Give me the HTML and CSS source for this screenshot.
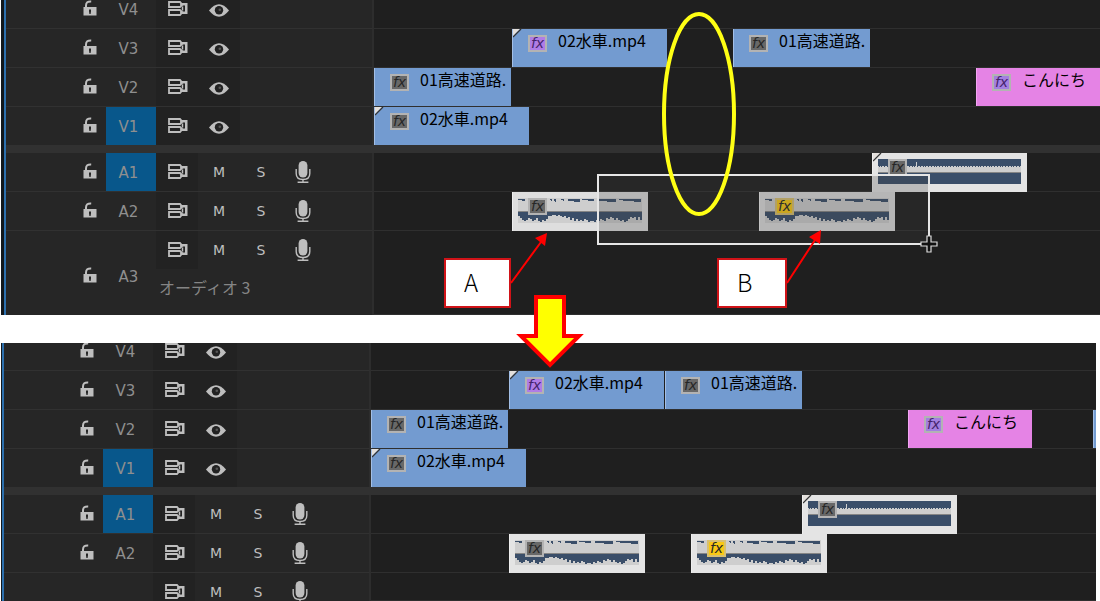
FILE: index.html
```html
<!DOCTYPE html>
<html lang="ja">
<head>
    <meta charset="UTF-8">
    <title>タイムライン</title>
    <link rel="stylesheet" href="styles.css">
</head>
<body>
<svg class="symbols" aria-hidden="true">
    <symbol id="lock" viewBox="0 0 14 16">
        <path d="M3 8V5.500C3 2.600 4.600 1.200 8.200 1.400" fill="none" stroke="currentColor" stroke-width="2"/>
        <path d="M.5 7h13v8.500H.5zM6 9.500v2l.4 2.500h1.200l.4-2.500v-2z" fill="currentColor" fill-rule="evenodd"/>
    </symbol>
    <symbol id="sync" viewBox="0 0 20 15">
        <path d="M1 1h11l1 1v3l-1 1H1zM1 9h11l1 1v3l-1 1H1z" fill="none" stroke="currentColor" stroke-width="1.800"/>
        <path d="M13 2h6.500v11H13v-3.500h1l1 1h2V4.500h-2l-1 1h-1z" fill="currentColor"/>
        <path d="M14.500 5.500v4" stroke="currentColor" stroke-width="1.500"/>
    </symbol>
    <symbol id="eye" viewBox="0 0 20 13">
        <path d="M0 6.500Q5 .3 10 .3T20 6.500Q15 12.700 10 12.700T0 6.500z" fill="currentColor"/>
        <circle cx="10" cy="6.300" r="4.200" fill="#222"/>
        <circle cx="10.800" cy="5.800" r="1.300" fill="#555"/>
    </symbol>
    <symbol id="mic" viewBox="0 0 16 22">
        <rect x="3.600" y="0" width="8.800" height="16.500" rx="4.400" fill="currentColor"/>
        <path d="M1.200 8v4.500C1.200 16.400 4 18.500 8 18.500s6.800-2.100 6.800-6V8M8 18v3M2.600 21.200h10.800" fill="none" stroke="currentColor" stroke-width="1.400"/>
    </symbol>
</svg>

<main class="page">
    <section class="panel before" aria-label="移動前">
        <div class="tracks"></div>
        <svg class="marks" width="1100" height="315" aria-hidden="true">
            <rect x="598" y="175" width="331" height="69" fill="#3f3f3f" fill-opacity=".25" stroke="#e6e6e6" stroke-width="2"/>
            <path d="M927 236h4v6h6v4h-6v6h-4v-6h-6v-4h6z" fill="#111" stroke="#ddd" stroke-width="1.200"/>
            <ellipse cx="699" cy="114" rx="35" ry="100" fill="none" stroke="#ffff14" stroke-width="4"/>
            <g stroke="#f00" fill="#f00" stroke-width="2">
                <path d="M511 283L541 242M787 283L815 240"/>
                <path d="M547 233L535 238L545 246zM821 230L809 237L820 244z" stroke="none"/>
            </g>
        </svg>
        <div class="label label-a">A</div>
        <div class="label label-b">B</div>
    </section>
    <div class="gap">
        <svg class="arrow" width="68" height="76" aria-hidden="true">
            <path d="M20 4h28v39h15L34 72L5 43h15z" fill="#ff0" stroke="#f00" stroke-width="4"/>
        </svg>
    </div>
    <section class="panel after" aria-label="移動後">
        <div class="tracks"></div>
    </section>
</main>
<script src="script.js"></script>
</body>
</html>
```
FILE: styles.css
```css
* {
    box-sizing: border-box;
}
body {
    margin: 0;
    background: #fff;
    font-family: "Noto Sans CJK JP", sans-serif;
    font-size: 16px;
}
.symbols {
    position: absolute;
    width: 0;
    height: 0;
}
.page {
    overflow: hidden;
}
.panel {
    position: relative;
    margin-left: 1px;
    background: #1f1f1f;
    border-left: 3px solid #11171c;
}
.tracks {
    border-left: 2px solid #2c70ae;
    overflow: hidden;
}
.after {
    border-left-width: 1px;
    margin-right: 4px;
}
.gap {
    position: relative;
    z-index: 2;
    height: 28px;
}

/* 行 */
.track {
    display: flex;
    height: 39px;
    overflow: hidden;
}
.track.top {
    height: 29px;
    align-items: flex-end;
}
.after .track.top {
    height: 28px;
}
.track.top .head,
.track.top .lane {
    height: 39px;
}
.track.last-video {
    height: 38px;
}
.track.tall {
    height: 84px;
}
.track.tall .head {
    height: 90px;
}
.after .track.tall {
    height: 28px;
}
.divider {
    height: 8px;
    background: #313131;
}
.head {
    display: grid;
    grid-template-columns: 100px 50px 42px 42px 42px 42px 1fr;
    grid-template-rows: 38px 1fr;
    flex: none;
    width: 368px;
    background: #262626;
    border-right: 2px solid #2d2d2d;
    border-bottom: 1px solid #313131;
}
.after .head {
    grid-template-columns: 99px 50px 42px 42px 42px 42px 1fr;
    width: 367px;
}
.lane {
    position: relative;
    flex: 1;
    border-bottom: 1px solid #2f2f2f;
}
.last-video .head,
.last-video .lane {
    border-bottom: 0;
}
.head button {
    display: flex;
    align-items: center;
    justify-content: center;
    padding: 0;
    border: 0;
    background: none;
    color: #bebebe;
    font: 14px "DejaVu Sans", sans-serif;
}
.head .lock,
.head .target {
    grid-column: 1;
    grid-row: 1 / 3;
}
.head .lock {
    justify-content: flex-end;
    padding: 0 9px 2px 0;
}
.head .target {
    grid-column: 2;
    padding: 2px 5px 0 0;
    color: #8f8f8f;
    font-size: 15px;
}
.head .target.on {
    grid-row: 1;
    background: #08578b;
}
.head .sync {
    grid-column: 3;
    padding: 0 0 2px 2px;
    background: #222;
}
.head .eye {
    padding-top: 2px;
    background: #222;
}
.track-name {
    grid-column: 3 / 8;
    padding-left: 3px;
    color: #858585;
    line-height: 36px;
}

/* クリップ */
.clip {
    position: absolute;
    top: 0;
    display: flex;
    align-items: flex-start;
    gap: 11px;
    height: 38px;
    padding: 6px 0 0 15px;
    overflow: hidden;
    background: #739bd0;
    border-left: 1px solid #a3bfe6;
    color: #000;
    white-space: nowrap;
}
.clip.pink {
    background: #e583e5;
    border-color: #f3a5f3;
}
.clip.audio {
    height: 39px;
    background: #dedede;
    border-color: #eee;
}
.after .clip.audio,
.clip.a1 {
    background: #e4e4e4;
}
.clip-name {
    margin-top: -7px;
    line-height: 24px;
}
.fx {
    position: relative;
    flex: none;
    width: 19px;
    height: 17px;
    border: 2px solid #b3b3b3;
    background: #686868;
    color: #262626;
    font: italic 14px/12px "DejaVu Sans", sans-serif;
    text-align: center;
}
.fx.purple {
    background: #b07ce6;
    color: #45236b;
}
.pink .fx.purple {
    background: #a37fe0;
}
.fx.yellow {
    background: #f8c814;
    border-color: #d8c070;
}
.wave {
    position: absolute;
    top: 0;
    left: 5px;
}
.corner {
    position: absolute;
    top: 0;
    left: 0;
}

/* 注釈 */
.marks {
    position: absolute;
    top: 0;
    left: -4px;
}
.label {
    position: absolute;
    top: 258px;
    height: 50px;
    padding-left: 18px;
    border: 2px solid #d01318;
    background: #fff;
    color: #000;
    font-size: 24px;
    font-weight: 300;
    line-height: 44px;
}
.label-a {
    left: 440px;
    width: 67px;
}
.label-b {
    left: 713px;
    width: 70px;
}
.arrow {
    position: absolute;
    top: -22px;
    left: 516px;
}
```
FILE: script.js
```javascript
const icon = (id, w, h) => `<svg width="${w}" height="${h}" aria-hidden="true"><use href="#${id}"/></svg>`

// 波形の深さ（2pxごと）
const loud = [4,6,8,9,8,6,7,9,8,6,9,10,8,9,7,4,4,3,3,4,3,4,5,4,6,5,8,6,9,7,9,8,9,7,8,10,9,9,10,8,9,7,8,9,6,7,5,6,8,6,8,9,8,10,9,7,5,6,5,8,5,8]
const dashes = [[0,7],[26,3],[32,2],[36,2],[43,3],[50,12],[64,12],[80,18],[101,8],[109,14]]

function wave (kind, width) {
    const w = width - 12
    let d = ''
    if (kind === 'loud') {
        loud.forEach((v, i) => d += `M${i * 2} 20h2v${v}h-2z`)
        dashes.forEach(([x, n], i) => d += `M${x} 7h${n}v${2 + i % 2}h-${n >> 1}v-1h-${n - (n >> 1)}z`)
    } else {
        d = `M0 20h${w}v11h-${w}z`
        for (let x = 0; x < w; x++) {
            const h = x === 38 ? 3 : 7 + (x * 7 % 11 > 6 ? 1 : 0)
            d += `M${x} 6h1v${h}h-1z`
        }
    }
    return `<svg class="wave" width="${w}" height="38" aria-hidden="true">
        <path d="M0 6h${w}v25h-${w}z" fill="#cecece"/>
        <path d="M0 19h${w}v1h-${w}z" fill="#858585"/>
        <path d="${d}" fill="#3a4e69"/></svg>`
}

const corner = '<svg class="corner" width="9" height="9" aria-hidden="true"><path d="M0 0h7L0 7z" fill="#e4e0dc"/><path d="M8 0L0 8" stroke="#333" stroke-width="1.2"/></svg>'

function clip (c) {
    return `<div class="clip ${c.kind || ''} ${c.wave ? 'audio' : ''}" style="left:${c.x}px;width:${c.w}px">
        ${c.wave ? wave(c.wave, c.w) : ''}${c.corner ? corner : ''}
        ${c.fx === undefined ? '' : `<span class="fx ${c.fx}">fx</span>`}
        ${c.name ? `<span class="clip-name">${c.name}</span>` : ''}
    </div>`
}

function track (id, cls, clips, audio) {
    const on = id === 'V1' || id === 'A1'
    const controls = audio
        ? `<button aria-label="ミュート">M</button><button aria-label="ソロ">S</button>
           <button aria-label="録音">${icon('mic', 16, 22)}</button>`
        : `<button class="eye" aria-label="表示">${icon('eye', 20, 13)}</button>`
    return `<div class="track ${cls}">
        <div class="head">
            ${id ? `<button class="lock" aria-label="ロック">${icon('lock', 14, 16)}</button>
            <button class="target ${on ? 'on' : ''}">${id}</button>` : ''}
            <button class="sync" aria-label="同期ロック">${icon('sync', 20, 15)}</button>
            ${controls}
            ${id === 'A3' ? '<div class="track-name">オーディオ 3</div>' : ''}
        </div>
        <div class="lane">${clips.map(clip).join('')}</div>
    </div>`
}

function render (selector, data) {
    document.querySelector(selector).innerHTML =
        track('V4', 'top', []) +
        track('V3', '', data.V3) +
        track('V2', '', data.V2) +
        track('V1', 'last-video', data.V1) +
        '<div class="divider"></div>' +
        track('A1', '', data.A1, true) +
        track('A2', '', data.A2, true) +
        track(data.last, 'tall', [], true)
}

const road = { name: '01高速道路.', fx: '', w: 137 }
const wheel = { name: '02水車.mp4', fx: '', w: 155, corner: true }
const hello = { name: 'こんにち', fx: 'purple', kind: 'pink', w: 124 }
const quiet = { wave: 'quiet', kind: 'a1', fx: '', w: 155, corner: true }
const sound = { wave: 'loud', fx: '', w: 136 }

render('.before .tracks', {
    V3: [{ ...wheel, fx: 'purple', x: 138 }, { ...road, x: 359 }],
    V2: [{ ...road, x: 0 }, { ...hello, x: 602 }],
    V1: [{ ...wheel, x: 0 }],
    A1: [{ ...quiet, x: 498 }],
    A2: [{ ...sound, x: 138 }, { ...sound, fx: 'yellow', x: 385 }],
    last: 'A3'
})
render('.after .tracks', {
    V3: [{ ...wheel, fx: 'purple', x: 138 }, { ...road, x: 294 }],
    V2: [{ ...road, x: 0 }, { ...hello, x: 537 }, { x: 722, w: 155 }],
    V1: [{ ...wheel, x: 0 }],
    A1: [{ ...quiet, x: 431 }],
    A2: [{ ...sound, x: 138 }, { ...sound, fx: 'yellow', x: 320 }],
    last: ''
})
```
